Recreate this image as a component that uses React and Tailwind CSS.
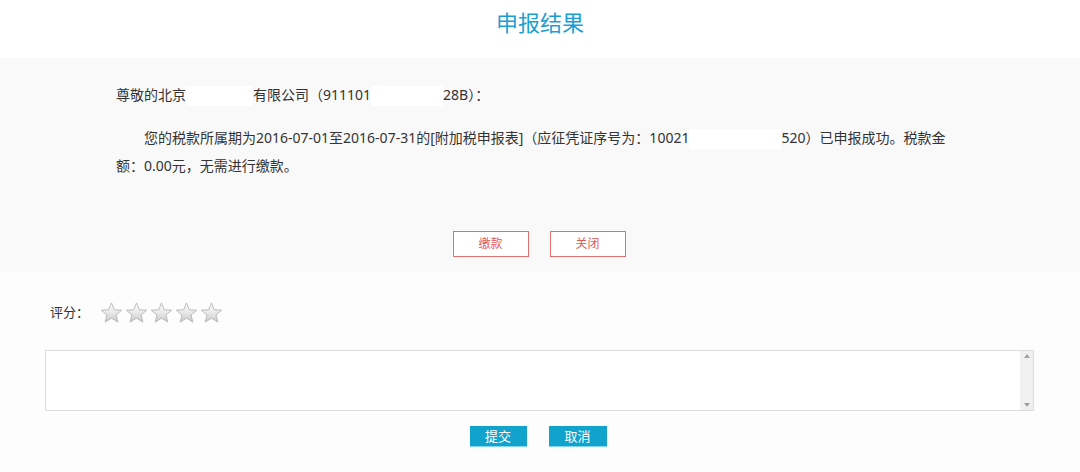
import React from "react";

const font = { fontFamily: '"Noto Sans", "Noto Sans CJK SC", sans-serif' };

const Star = ({ id }) => (
  <svg width="23" height="22" viewBox="0 0 24 23">
    <defs>
      <linearGradient id={`g${id}`} x1="0" y1="0" x2="0" y2="1">
        <stop offset="0" stopColor="#ffffff" />
        <stop offset="0.55" stopColor="#e6e6e6" />
        <stop offset="1" stopColor="#c9c9c9" />
      </linearGradient>
    </defs>
    <path
      d="M12 1 L14.9 8.1 L22.6 8.6 L16.7 13.5 L18.6 21 L12 16.9 L5.4 21 L7.3 13.5 L1.4 8.6 L9.1 8.1 Z"
      fill={`url(#g${id})`}
      stroke="#b8b8b8"
      strokeWidth="1"
      strokeLinejoin="round"
    />
  </svg>
);

// white box hiding part of the text (redacted)
const Mask = ({ w }) => (
  <span className="inline-block h-[20px] bg-white align-middle" style={{ width: w }} />
);

export default function App() {
  return (
    <div className="w-[1080px] h-[472px] bg-[#fdfdfe] text-[#333] overflow-hidden" style={font}>
      {/* title */}
      <div className="h-[58px] bg-white flex justify-center pt-[6px]">
        <h1 className="text-[22px] leading-[32px] text-[#1a9fd3]">申报结果</h1>
      </div>

      {/* result block */}
      <div className="bg-[#f9f9f9] pt-[23px] pb-[15px]">
        <div className="pl-[116px] w-[960px] text-[14px]">
          <p className="leading-[28px] whitespace-nowrap">
            尊敬的北京<Mask w={67} />有限公司（911101<Mask w={72} />28B）：
          </p>
          <p className="mt-[15px] leading-[28px] indent-[28px] whitespace-nowrap">
            您的税款所属期为2016-07-01至2016-07-31的[附加税申报表]（应征凭证序号为：10021<Mask w={92} />520）已申报成功。税款金
            <br />
            额：0.00元，无需进行缴款。
          </p>
        </div>
        <div className="mt-[51px] flex justify-center gap-[21px] pr-[2px]">
          <button className="w-[76px] h-[26px] border border-[#e07070] bg-white text-[#e05a5a] text-[12px]">缴款</button>
          <button className="w-[76px] h-[26px] border border-[#e07070] bg-white text-[#e05a5a] text-[12px]">关闭</button>
        </div>
      </div>

      {/* rating */}
      <div className="mt-[29px] pl-[50px] flex items-center h-[24px]">
        <span className="text-[13px] w-[50px]">评分：</span>
        <div className="flex gap-[2px]">
          {[0, 1, 2, 3, 4].map((i) => (
            <Star key={i} id={i} />
          ))}
        </div>
      </div>

      <div className="mt-[25px] ml-[45px] w-[989px] h-[61px] border border-[#dcdcdc] bg-white flex">
        <textarea className="flex-1 resize-none outline-none bg-white" />
        <div className="w-[13px] bg-[#f0f0f0] flex flex-col justify-between items-center py-[3px]">
          <span className="w-0 h-0 border-x-[3px] border-x-transparent border-b-[4px] border-b-[#a0a0a0]" />
          <span className="w-0 h-0 border-x-[3px] border-x-transparent border-t-[4px] border-t-[#a0a0a0]" />
        </div>
      </div>

      <div className="mt-[15px] flex justify-center gap-[22px] pr-[4px]">
        <button className="w-[57px] h-[21px] bg-[#12a3cd] text-white text-[13px] leading-[21px] border-b border-[#7fd6ef]">提交</button>
        <button className="w-[58px] h-[21px] bg-[#12a3cd] text-white text-[13px] leading-[21px] border-b border-[#7fd6ef]">取消</button>
      </div>
    </div>
  );
}
